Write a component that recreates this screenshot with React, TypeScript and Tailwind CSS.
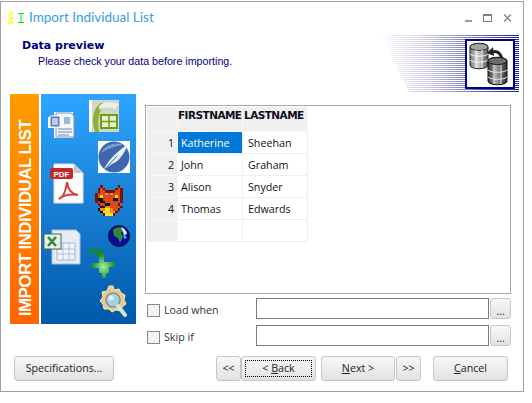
import React from "react";

const font = "font-['Open_Sans',sans-serif]";

const WindowLogo = () => (
  <svg width="18" height="16" viewBox="0 0 18 16" className="shrink-0">
    <text x="1" y="-1" transform="rotate(90)" fontSize="9" fontWeight="700" fontFamily="Liberation Serif, serif" fill="#ffff00">SM</text>
    <path d="M11 3.500h6M14 3.500v9M11 12.500h6" stroke="#10e010" strokeWidth="1" fill="none" />
  </svg>
);

const stripeRows = Array.from({ length: 29 }, (_, i) => i);

const Stripes = () => (
  <svg width="138" height="58" viewBox="0 0 138 58" className="block">
    <defs>
      <linearGradient id="fade" gradientUnits="userSpaceOnUse" x1="0" y1="0" x2="138" y2="0">
        <stop offset="0" stopColor="#ffffff" />
        <stop offset="0.35" stopColor="#c6c6e4" />
        <stop offset="0.7" stopColor="#6a6ab4" />
        <stop offset="1" stopColor="#1c1c8c" />
      </linearGradient>
    </defs>
    {stripeRows.map((i) => (
      <rect key={i} x={i} y={i * 2} width={138 - i} height="1" fill="url(#fade)" />
    ))}
  </svg>
);

const DbIcon = () => (
  <svg width="42" height="44" viewBox="0 0 42 44">
    <defs>
      <linearGradient id="db1" x1="0" x2="1" y1="0" y2="0">
        <stop offset="0" stopColor="#777" />
        <stop offset="0.4" stopColor="#d8d8d8" />
        <stop offset="1" stopColor="#555" />
      </linearGradient>
      <linearGradient id="db2" x1="0" x2="1" y1="0" y2="0">
        <stop offset="0" stopColor="#333" />
        <stop offset="0.4" stopColor="#a8a8a8" />
        <stop offset="1" stopColor="#2a2a2a" />
      </linearGradient>
    </defs>
    <path d="M1 5c0-5 18-5 18 0v18c0 5-18 5-18 0z" fill="url(#db1)" stroke="#222" />
    <ellipse cx="10" cy="5" rx="9" ry="3.500" fill="#a4a4a4" stroke="#333" />
    <path d="M1 12c3 3 15 3 18 0M1 18c3 3 15 3 18 0M7 8v18M13 8v18" stroke="#f4f4f4" fill="none" />
    <path d="M21 12c5-5 11-2 12 6" stroke="#222" strokeWidth="3" fill="none" />
    <path d="M24 5l-6 6 7 3z" fill="#222" />
    <path d="M19 19c0-5 19-5 19 0v20c0 5-19 5-19 0z" fill="url(#db2)" stroke="#111" />
    <ellipse cx="28.500" cy="19" rx="9.500" ry="3.500" fill="#6c6c6c" stroke="#1c1c1c" />
    <path d="M19 28c3 3 16 3 19 0M19 35c3 3 16 3 19 0M25 23v19M32 23v19" stroke="#eee" fill="none" />
  </svg>
);

const DocIcon = () => (
  <svg width="31" height="31" viewBox="0 0 31 31" className="absolute left-[6px] top-[14px]">
    <path d="M7 4h19v26H7zM1 9h7v11H1z" fill="#fff" />
    <path d="M9 5h15l3 3v21H9z" fill="#f4f7fc" stroke="#7f93b8" />
    <path d="M3 8h10v11H3z" fill="#5578b8" stroke="#fff" />
    <path d="M5 10h6v7H5z" fill="#b9cbea" />
    <path d="M17 9h6v7h-6z" fill="#9db6dc" />
    <path d="M11 21h14M11 24h14M11 27h11" stroke="#6d82ad" />
  </svg>
);

const SheetIcon = () => (
  <svg width="30" height="32" viewBox="0 0 30 32" className="absolute left-[48px] top-[6px]">
    <rect width="30" height="32" fill="#fff" />
    <path d="M3 0h27v32H3z" fill="#cfd8c8" />
    <path d="M6 32C2 20 4 8 12 3l4 1C10 10 8 20 10 32z" fill="#8cb034" />
    <path d="M10 6c6-5 12-4 20-2l-4 5C20 7 14 7 10 10z" fill="#eef0e6" />
    <path d="M12 15h16v13H12z" fill="#e8f0c8" stroke="#6e9b1c" strokeWidth="2" />
    <path d="M12 21.500h16M20 15v13" stroke="#6e9b1c" strokeWidth="1.500" />
  </svg>
);

const QuillIcon = () => (
  <svg width="34" height="34" viewBox="0 0 34 34" className="absolute left-[56px] top-[46px]">
    <rect x="1" y="1" width="32" height="32" fill="#fff" />
    <circle cx="17" cy="17" r="15.500" fill="#3f68ac" />
    <path d="M4 13C8 5 18 1 26 5 18 6 10 9 4 13z" fill="#7d9dcc" />
    <path d="M7 29c4-8 10-15 24-25-3 8-7 14-12 18-3 1-6 3-8 5z" fill="#e8eef8" />
    <path d="M8 29l12-13" stroke="#3f68ac" />
  </svg>
);

const PdfIcon = () => (
  <svg width="34" height="41" viewBox="0 0 34 41" className="absolute left-[9px] top-[69px]">
    <path d="M4 1h20l9 9v30H4z" fill="#fdfdfd" stroke="#e0e0e0" />
    <path d="M24 1l9 9h-9z" fill="#c8c8c8" />
    <rect x="0" y="5" width="23" height="11" rx="2" fill="#c4282c" />
    <text x="11.500" y="13.500" textAnchor="middle" fontSize="8" fontWeight="700" fontFamily="Liberation Sans, sans-serif" fill="#fff">PDF</text>
    <path d="M9 36c4-2 7-8 8-17 1 8 4 12 11 13-7-1-14 0-19 4z" fill="none" stroke="#d43c34" strokeWidth="2" />
  </svg>
);

const foxCells = [
  "..x......x.",
  ".xrx....xrx",
  ".xrrxxxxrrx",
  "xrrrororrrx",
  "xryrrrrryrx",
  "xkkrrrrkkrx",
  "xrkkrrrrrrx",
  ".xrrkkrrrx.",
  "..kkoorrrrx",
  ".kooyyorrx.",
  "..kyyyoox..",
  "...xyyyx...",
];
const foxColors: Record<string, string> = { x: "#7a1010", r: "#d84818", o: "#f09018", y: "#ffe020", k: "#141010" };

const FoxIcon = () => (
  <svg width="28" height="31" viewBox="0 0 11 12" shapeRendering="crispEdges" className="absolute left-[54px] top-[91px]">
    {foxCells.flatMap((row, y) =>
      row.split("").map((c, x) => (c === "." ? null : <rect key={x + "-" + y} x={x} y={y} width="1" height="1" fill={foxColors[c]} />))
    )}
  </svg>
);

const ExcelIcon = () => (
  <svg width="38" height="38" viewBox="0 0 38 38" className="absolute left-[2px] top-[134px]">
    <path d="M9 2h24l4 4v30H9z" fill="#e4ecf8" stroke="#b4bccc" />
    <path d="M14 15h18v17H14z" fill="#f0f4fc" stroke="#a8b4d0" />
    <path d="M14 21h18M14 26h18M20 15v17M26 15v17" stroke="#b0bcdc" />
    <rect x="1" y="6" width="17" height="15" fill="#e8efe4" stroke="#4a6a4a" />
    <path d="M5 9l8 9M13 9l-8 9" stroke="#2e8a3e" strokeWidth="2.500" />
  </svg>
);

const GlobeIcon = () => (
  <svg width="22" height="22" viewBox="0 0 22 22" className="absolute left-[67px] top-[131px]">
    <circle cx="11" cy="11" r="10.500" fill="#0a0a9c" stroke="#111" />
    <path d="M5 5c3-3 8-3 10-1l-2 4 2 4-3 6-2-5-4-2z" fill="#2e8a2e" />
    <path d="M13 2c3 1 5 3 6 7l-3 1z" fill="#e8f4ff" />
    <path d="M15 7l4 6-3 1z" fill="#38b4e8" />
  </svg>
);

const ArrowIcon = () => (
  <svg width="26" height="30" viewBox="0 0 26 30" className="absolute left-[48px] top-[155px]">
    <defs>
      <radialGradient id="arrowGlow" cx="0.55" cy="0.62" r="0.45">
        <stop offset="0" stopColor="#a4f09c" />
        <stop offset="1" stopColor="#178a24" />
      </radialGradient>
    </defs>
    <path d="M0 0h10l5 4v9h11v5h-6v6h-3v5h-4v-5h-3v-5H3v-5h7V7L6 4H0z" fill="url(#arrowGlow)" />
  </svg>
);

const GearIcon = () => (
  <svg width="29" height="34" viewBox="0 0 29 34" className="absolute left-[58px] top-[191px]">
    <path d="M10 1h4l1 4 5-1 2 4 4 2-1 5 2 4-4 3-1 4-5-1-4 2-3-3-5 0-1-5-3-3 3-4-1-5 5-1z" fill="#f2c880" stroke="#fbe8c0" />
    <circle cx="14" cy="15" r="7" fill="#a8d0e0" stroke="#6a98b8" strokeWidth="1.500" />
    <circle cx="12" cy="13" r="2.500" fill="#e8f6fc" />
    <path d="M19 21l7 9" stroke="#d8e8d0" strokeWidth="4" strokeLinecap="round" />
  </svg>
);

const SidePanel = () => (
  <div className="flex gap-[2px] shrink-0">
    <div className="w-[29px] h-[230px] bg-gradient-to-b from-[#ff9c00] to-[#ff6400] flex items-end justify-center pb-[8px] pl-px">
      <span className="[writing-mode:vertical-rl] rotate-180 whitespace-nowrap text-white font-bold text-[17px] tracking-[-0.6px] leading-none font-['Liberation_Sans',sans-serif]">
        IMPORT INDIVIDUAL LIST
      </span>
    </div>
    <div className="relative w-[95px] h-[230px] bg-gradient-to-b from-[#2ea6ff] to-[#0058a8]">
      <DocIcon />
      <SheetIcon />
      <QuillIcon />
      <PdfIcon />
      <FoxIcon />
      <ExcelIcon />
      <GlobeIcon />
      <ArrowIcon />
      <GearIcon />
    </div>
  </div>
);

const rows = [
  ["1", "Katherine", "Sheehan"],
  ["2", "John", "Graham"],
  ["3", "Alison", "Snyder"],
  ["4", "Thomas", "Edwards"],
  ["", "", ""],
];

const DataGrid = () => (
  <div className="h-[189px] border border-[#a6a6a6] bg-white pl-px pt-px">
    <div className="grid grid-cols-[31px_65px_65px] grid-rows-[25px_22px_22px_22px_22px_22px] w-fit text-[10.700px] text-[#111]">
      <div className="bg-[#f0f0f0] border-r border-b border-[#f8f8f8]" />
      <div className="bg-[#f0f0f0] border-r border-b border-[#f8f8f8] font-bold text-[10.500px] text-[#0c0c1c] font-['DejaVu_Sans',sans-serif] pt-px tracking-[-0.55px] whitespace-nowrap overflow-hidden">FIRSTNAME</div>
      <div className="bg-[#f0f0f0] border-r border-b border-[#f8f8f8] font-bold text-[10.500px] text-[#0c0c1c] font-['DejaVu_Sans',sans-serif] pl-px pt-px tracking-[-0.55px] whitespace-nowrap overflow-hidden">LASTNAME</div>
      {rows.map((r, i) => (
        <React.Fragment key={i}>
          <div className="bg-[#f0f0f0] border-r border-b border-[#f8f8f8] text-right pr-[3px] pt-px leading-[20px]">{r[0]}</div>
          <div className={"border-r border-b border-[#efefef] pl-[3px] pt-px leading-[20px] " + (i === 0 ? "bg-[#0078d7] text-white" : "")}>{r[1]}</div>
          <div className="border-r border-b border-[#efefef] pl-[5px] pt-px leading-[20px]">{r[2]}</div>
        </React.Fragment>
      ))}
    </div>
  </div>
);

const btn = "rounded-[3px] border border-[#c6c6c6] bg-gradient-to-b from-[#f8f8f8] to-[#e2e2e2] text-[#222] text-[10.700px] flex items-center justify-center h-[25px] shrink-0";

const ConditionRow = ({ label }: { label: string }) => (
  <div className="flex items-start h-[21px]">
    <span className="mt-[6px] w-[13px] h-[13px] border border-[#8a8a8a] bg-[#f4f4f4] shrink-0" />
    <span className="mt-[4px] ml-[4px] w-[92px] text-[10.700px] leading-[16px] text-[#333]">{label}</span>
    <div className="w-[233px] h-[21px] border border-[#7a7a7a] bg-white" />
    <div className="ml-px w-[21px] h-[21px] rounded-[3px] border border-[#c6c6c6] bg-gradient-to-b from-[#f8f8f8] to-[#e2e2e2] text-[11px] text-[#333] flex items-center justify-center leading-none pt-[3px]">...</div>
  </div>
);

export default function App() {
  return (
    <div className={"w-[532px] h-[403px] bg-white pt-px " + font}>
      <div className="w-[524px] h-[391px] border border-[#a0a0a0] bg-white flex flex-col">
        {/* title bar */}
        <div className="h-[32px] flex items-center pl-[6px] shrink-0">
          <WindowLogo />
          <span className="ml-[4px] -mt-[2px] text-[13.500px] text-[#3a9cec] font-['Lato',sans-serif]">Import Individual List</span>
          <div className="ml-auto mr-[11px] flex items-center gap-[11px]">
            <svg width="8" height="8" viewBox="0 0 8 8"><rect x="1" y="6" width="7" height="2" fill="#9a9a9a" /></svg>
            <svg width="9" height="8" viewBox="0 0 9 8"><rect x="0.500" y="0.500" width="8" height="7" fill="none" stroke="#7c7c7c" /><rect x="0" y="0" width="9" height="2" fill="#7c7c7c" /></svg>
            <svg width="9" height="8" viewBox="0 0 9 8"><path d="M1 0.500l7 7M8 0.500l-7 7" stroke="#8c8c8c" strokeWidth="1.500" /></svg>
          </div>
        </div>
        {/* heading */}
        <div className="h-[60px] flex shrink-0">
          <div className="pl-[21px] pt-[5px]">
            <div className="text-[11px] font-bold text-[#000080] font-['DejaVu_Sans',sans-serif] leading-[14px]">Data preview</div>
            <div className="pl-[16px] mt-px text-[10.700px] text-[#000080] leading-[14px] font-['Liberation_Sans',sans-serif]">Please check your data before importing.</div>
          </div>
          <div className="relative ml-auto mr-[4px] mt-px h-[58px]">
            <Stripes />
            <div className="absolute left-[84px] top-[4px] w-[50px] h-[50px] border-2 border-[#000080] bg-white flex items-center justify-center">
              <DbIcon />
            </div>
          </div>
        </div>
        {/* body */}
        <div className="flex pl-[9px]">
          <SidePanel />
          <div className="ml-[9px] pt-[11px] w-[366px]">
            <DataGrid />
            <div className="mt-[4px] flex flex-col gap-[6px] pl-[2px]">
              <ConditionRow label="Load when" />
              <ConditionRow label="Skip if" />
            </div>
          </div>
        </div>
        {/* buttons */}
        <div className="mt-[10px] flex pl-[13px]">
          <div className={btn + " w-[100px]"}>Specifications...</div>
          <div className={btn + " w-[25px] ml-[102px]"}>&lt;&lt;</div>
          <div className={btn + " relative w-[75px] border-[#a4a4a4] from-[#eeeeee] to-[#dcdcdc]"}>
            <span className="absolute inset-[3px] border border-dotted border-black" />
            <span>&lt; <u>B</u>ack</span>
          </div>
          <div className={btn + " w-[74px] ml-[5px]"}><span><u>N</u>ext &gt;</span></div>
          <div className={btn + " w-[25px] ml-px"}>&gt;&gt;</div>
          <div className={btn + " w-[75px] ml-[12px]"}><span><u>C</u>ancel</span></div>
        </div>
      </div>
    </div>
  );
}
